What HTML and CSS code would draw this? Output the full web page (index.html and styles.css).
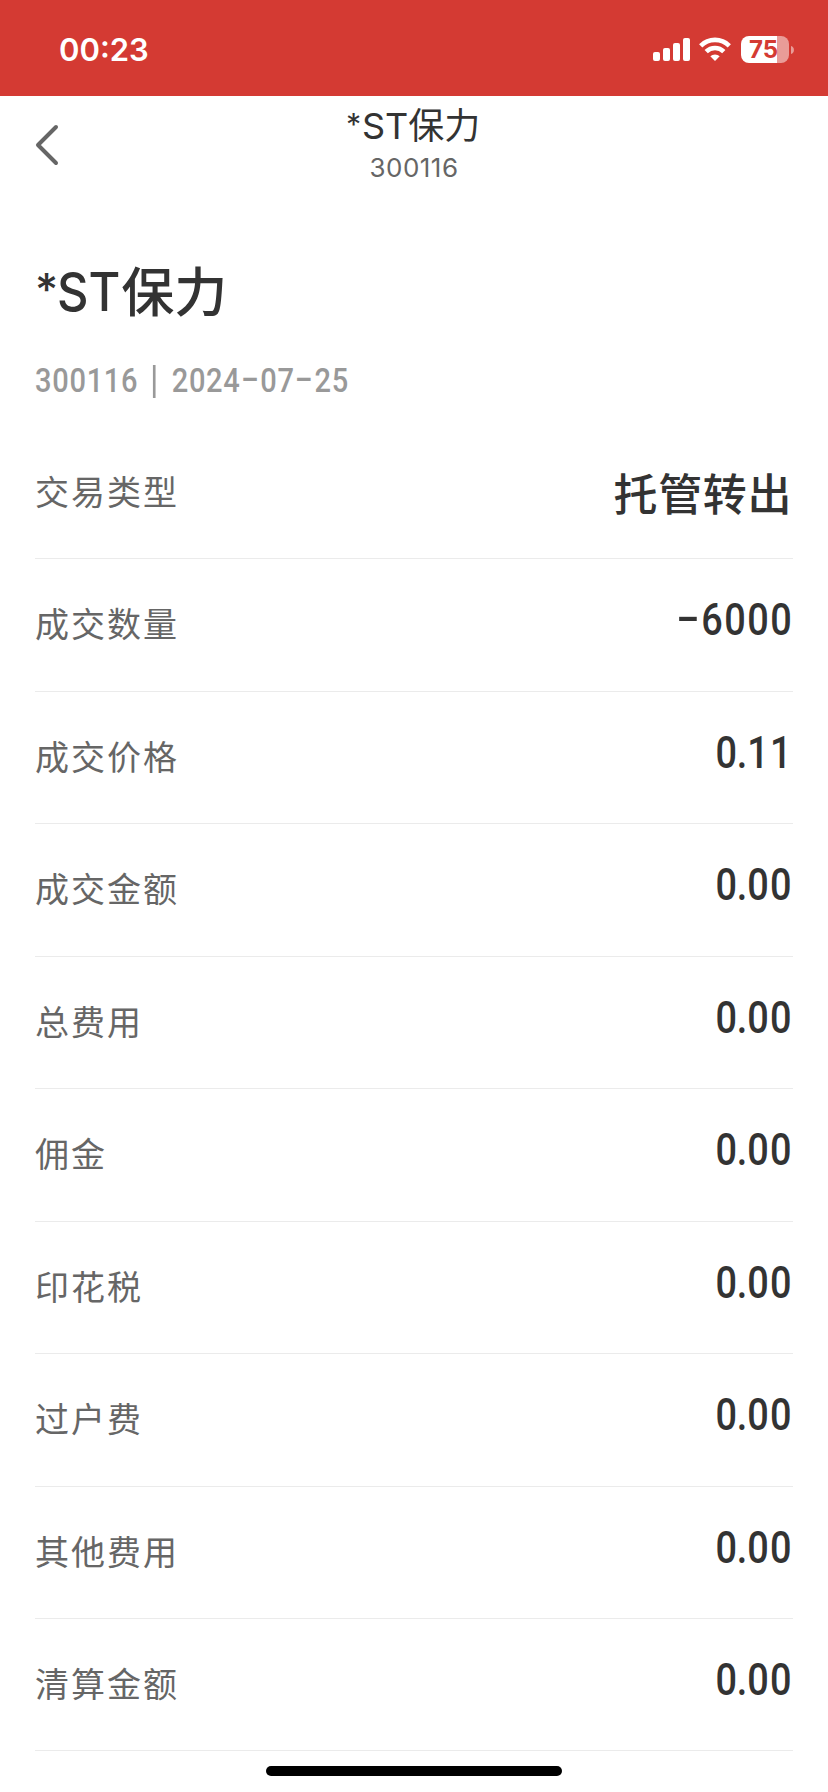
FILE: index.html
```html
<!DOCTYPE html>
<html lang="zh-CN">
<head>
    <meta charset="UTF-8">
    <meta name="viewport" content="width=device-width, initial-scale=1.0">
    <title>*ST保力</title>
    <link rel="stylesheet" href="styles.css">
</head>
<body>
    <!-- Status bar -->
    <div class="status-bar">
        <span class="time">00:23</span>
        <div class="status-icons">
            <svg class="signal" width="38" height="24" viewBox="0 0 38 24" fill="#fff">
                <rect x="0" y="14" width="7" height="9" rx="2"/>
                <rect x="10" y="10" width="7" height="13" rx="2"/>
                <rect x="20" y="5" width="7" height="18" rx="2"/>
                <rect x="30" y="0" width="7" height="23" rx="2"/>
            </svg>
            <svg class="wifi" width="32" height="24" viewBox="0 0 32 24" fill="none" stroke="#fff" stroke-width="4.6">
                <path d="M1.7 8.8a20.3 20.3 0 0 1 28.6 0"/>
                <path d="M7.2 14.6a12.5 12.5 0 0 1 17.6 0"/>
                <path d="M16 24l-4.7-4.7a6.8 6.8 0 0 1 9.4 0z" fill="#fff" stroke="none"/>
            </svg>
            <div class="battery">
                <span class="battery-text">75</span>
            </div>
            <svg class="battery-cap" width="3" height="8" viewBox="0 0 3 8"><path d="M0 0a4.2 4.2 0 0 1 0 8z" fill="#e99c98"/></svg>
        </div>
    </div>

    <!-- Navigation -->
    <div class="nav">
        <svg class="back" width="24" height="42" viewBox="0 0 24 42" fill="none" stroke="#666" stroke-width="4" stroke-linecap="round" stroke-linejoin="round">
            <path d="M21 3L3 21l18 18"/>
        </svg>
        <div class="nav-title">
            <div class="nav-name"><span class="star">*</span>ST保力</div>
            <div class="nav-code">300116</div>
        </div>
    </div>

    <!-- Trade detail -->
    <div class="detail">
        <h1 class="stock-name"><span class="star">*</span><span class="st">ST</span>保力</h1>
        <div class="stock-info"><span class="num">300116</span><span class="bar"></span><span class="num">2024<span class="dash">-</span>07<span class="dash">-</span>25</span></div>

        <div class="list">
            <div class="row"><span class="label">交易类型</span><span class="value text">托管转出</span></div>
            <div class="row"><span class="label">成交数量</span><span class="value"><span class="dash">-</span>6000</span></div>
            <div class="row"><span class="label">成交价格</span><span class="value">0<span class="dot">.</span>11</span></div>
            <div class="row"><span class="label">成交金额</span><span class="value">0<span class="dot">.</span>00</span></div>
            <div class="row"><span class="label">总费用</span><span class="value">0<span class="dot">.</span>00</span></div>
            <div class="row"><span class="label">佣金</span><span class="value">0<span class="dot">.</span>00</span></div>
            <div class="row"><span class="label">印花税</span><span class="value">0<span class="dot">.</span>00</span></div>
            <div class="row"><span class="label">过户费</span><span class="value">0<span class="dot">.</span>00</span></div>
            <div class="row"><span class="label">其他费用</span><span class="value">0<span class="dot">.</span>00</span></div>
            <div class="row"><span class="label">清算金额</span><span class="value">0<span class="dot">.</span>00</span></div>
        </div>
    </div>

    <div class="home-indicator"></div>
</body>
</html>
```
FILE: styles.css
```css
* {
    margin: 0;
    padding: 0;
    box-sizing: border-box;
}

body {
    display: flex;
    flex-direction: column;
    width: 828px;
    height: 1792px;
    overflow: hidden;
    background-color: #fff;
    color: #333;
    font-family: Inter, "Noto Sans CJK SC", sans-serif;
}

/* Status bar */
.status-bar {
    display: flex;
    justify-content: space-between;
    height: 96px;
    padding: 0 34px 0 59px;
    background-color: #d43a33;
    color: #fff;
}

.time {
    margin-top: 30px;
    font-size: 31px;
    font-weight: 600;
    line-height: 40px;
}

.status-icons {
    display: flex;
    align-items: flex-start;
    padding-top: 36px;
}

.signal {
    margin: 2px 8px 0 0;
}

.wifi {
    margin: 1px 10px 0 0;
}

.battery {
    width: 48px;
    height: 27px;
    border-radius: 8px;
    background: linear-gradient(to right, #fff 36px, #e99c98 36px);
}

.battery-text {
    display: block;
    padding-left: 8px;
    color: #d43a33;
    font-size: 24px;
    font-weight: 700;
    line-height: 27px;
}

.battery-cap {
    margin: 10px 0 0 2px;
}

/* Navigation */
.nav {
    display: grid;
    grid-template-columns: 100px 1fr 100px;
    height: 98px;
}

.back {
    margin: 28px 0 0 35px;
}

.nav-title {
    padding-top: 5px;
    text-align: center;
}

.nav-name {
    padding-right: 2px;
    font-size: 36px;
    line-height: 50px;
}

/* Small raised asterisk before the name */
.star {
    display: inline-block;
    line-height: 1;
    transform: translateY(.03em) scale(.84);
    transform-origin: left top;
    margin-right: -.05em;
}

.nav-code {
    color: #666;
    font-size: 26px;
    letter-spacing: .5px;
    line-height: 34px;
}

/* Trade detail */
.detail {
    padding: 0 35px;
}

.stock-name {
    padding-top: 62px;
    font-size: 53px;
    font-weight: 500;
    line-height: 74px;
}

.stock-name .star {
    margin-right: -.1em;
}

.st {
    display: inline-block;
    margin-right: -5px;
    line-height: 1;
    transform: translateY(-1px) scaleX(.92);
    transform-origin: left;
}

.stock-info {
    display: flex;
    align-items: center;
    height: 50px;
    margin-top: 26px;
    color: #999;
    font-family: Roboto, sans-serif;
    font-size: 33px;
    font-weight: 500;
    line-height: 50px;
    letter-spacing: .8px;
    transform: scaleX(.88);
    transform-origin: left;
}

.bar {
    width: 3px;
    height: 33px;
    margin: 0 18px 0 17px;
    background-color: #999;
}

.dash {
    display: inline-block;
    width: .68em;
    text-align: center;
    transform: translateY(-.06em) scaleX(1.8);
}

.value .dash {
    width: .62em;
}

.list {
    margin-top: 21px;
}

.row {
    display: flex;
    justify-content: space-between;
    height: 132.44px;
    border-bottom: 1px solid #ebebeb;
}

.label {
    padding-top: 41px;
    color: #666;
    font-size: 34px;
    letter-spacing: 2px;
    line-height: 50px;
}

.value {
    padding-top: 35px;
    font-family: Roboto, sans-serif;
    font-size: 44px;
    font-weight: 500;
    letter-spacing: 1.7px;
    line-height: 52px;
    transform: scaleX(.86);
    transform-origin: right;
}

.dot {
    margin: 0 -2px;
}

.value.text {
    padding: 39px 1px 0 0;
    font-family: "Noto Sans CJK SC", sans-serif;
    letter-spacing: .6px;
    transform: none;
}

.home-indicator {
    position: absolute;
    left: 266px;
    top: 1766px;
    width: 296px;
    height: 10px;
    border-radius: 5px;
    background-color: #000;
}
```
